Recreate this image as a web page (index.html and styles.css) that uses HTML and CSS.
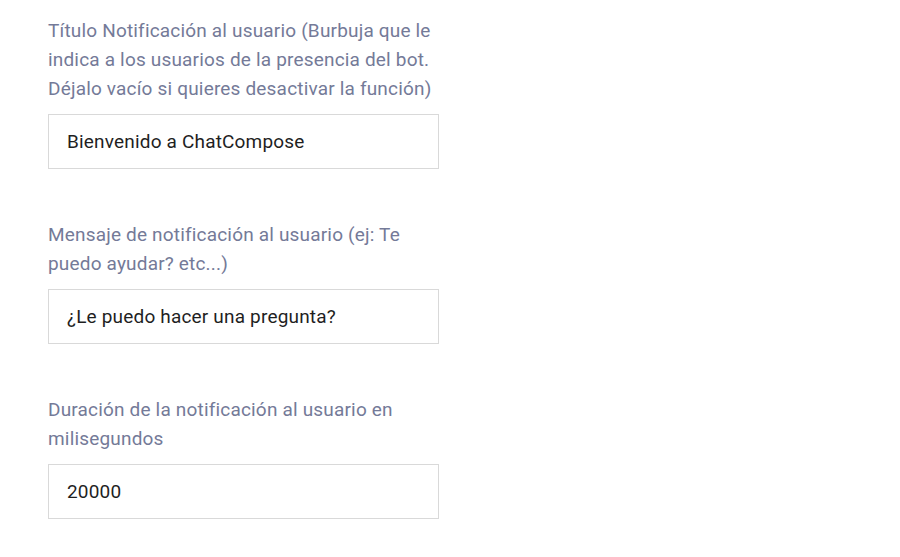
FILE: index.html
```html
<!DOCTYPE html>
<html lang="es">
<head>
    <meta charset="UTF-8">
    <meta name="viewport" content="width=device-width, initial-scale=1.0">
    <title>Notificación</title>
    <link rel="stylesheet" href="styles.css">
</head>
<body>
    <form class="settings">
        <div class="field">
            <label for="notif-title">Título Notificación al usuario (Burbuja que le indica a los usuarios de la presencia del bot. Déjalo vacío si quieres desactivar la función)</label>
            <input type="text" id="notif-title" value="Bienvenido a ChatCompose">
        </div>
        <div class="field">
            <label for="notif-message">Mensaje de notificación al usuario (ej: Te puedo ayudar? etc...)</label>
            <input type="text" id="notif-message" value="¿Le puedo hacer una pregunta?">
        </div>
        <div class="field">
            <label for="notif-duration">Duración de la notificación al usuario en milisegundos</label>
            <input type="text" id="notif-duration" value="20000">
        </div>
    </form>
</body>
</html>
```

FILE: styles.css
```css
body {
    font-family: Roboto, "Liberation Sans", sans-serif;
    background-color: #fff;
    margin: 0;
}
.settings {
    width: 391px;
    padding: 16px 0 0 48px;
    display: flex;
    flex-direction: column;
    gap: 51px;
}
.field {
    display: flex;
    flex-direction: column;
}
.field label {
    font-size: 19px;
    letter-spacing: 0.18px;
    line-height: 29px;
    color: #747a98;
    margin-bottom: 11px;
}
.field input {
    box-sizing: border-box;
    width: 391px;
    height: 55px;
    padding: 0 18px;
    border: 1px solid #d9d9d9;
    border-radius: 0;
    font-family: Roboto, "Liberation Sans", sans-serif;
    font-size: 19px;
    letter-spacing: 0.18px;
    color: #1f1f1f;
    background: #fff;
    outline: none;
}
```
